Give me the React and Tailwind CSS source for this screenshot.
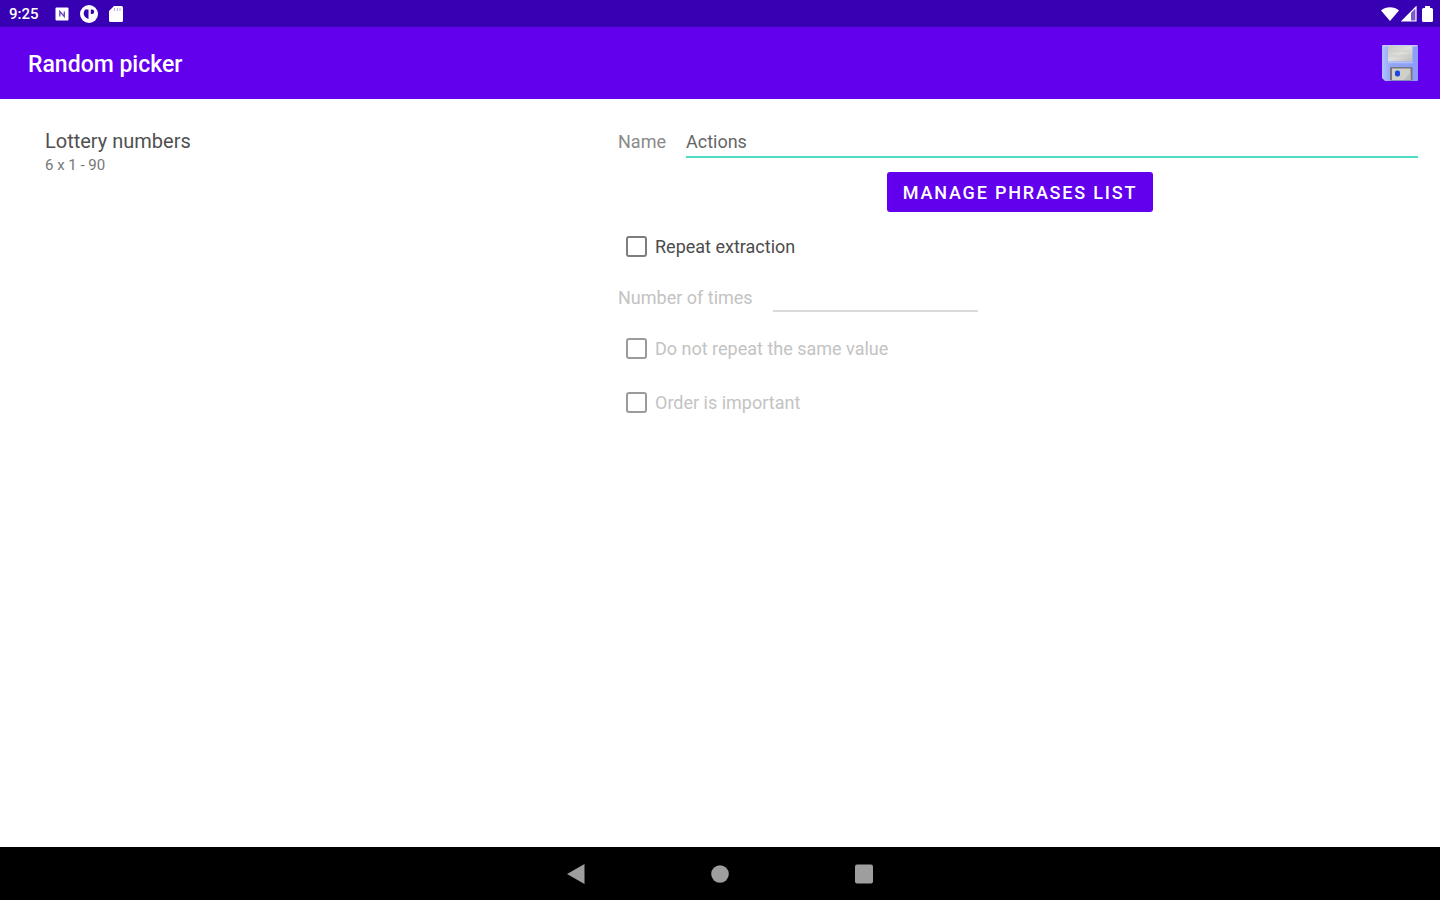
import React from "react";

function StatusBar() {
  return (
    <div className="flex h-[27px] items-center justify-between bg-[#3700b3] pl-[9px] pr-[7px] pt-px text-white">
      <div className="flex items-center">
        <time className="w-[46px] text-[15px] leading-5 font-medium">9:25</time>
        <svg className="h-[14px] w-[14px]" viewBox="0 0 14 14" aria-hidden="true">
          <rect x="0.5" y="0.5" width="13" height="13" rx="1" fill="currentColor" />
          <path d="M4.800 9.500v-5L9.300 9.500v-5" stroke="#3700b3" strokeOpacity="0.75" strokeWidth="1.3" fill="none" />
        </svg>
        <svg className="ml-[11px] h-[18px] w-[18px]" viewBox="0 0 18 18" aria-hidden="true">
          <circle cx="9" cy="9" r="9" fill="currentColor" />
          <path d="M5 4.500h3.500v9.500C5.500 13 3.600 11 3.600 8z" fill="#3700b3" />
          <path d="M10.800 4.500h1.200a2.200 2.200 0 0 1 0 4.400h-1.200z" fill="#3700b3" />
        </svg>
        <svg className="ml-[11px] h-4 w-[14px]" viewBox="0 0 14 16" aria-hidden="true">
          <path d="M5 0h7.5Q14 0 14 1.5v13q0 1.5-1.5 1.5h-11Q0 16 0 14.500V5z" fill="currentColor" />
          <path d="M5.500 2v3M8.300 2v3M11 2v3" stroke="#3700b3" strokeOpacity="0.35" strokeWidth="1" />
        </svg>
      </div>
      <div className="flex items-center">
        <svg className="h-[14px] w-[18px]" viewBox="0 0 18 14" aria-hidden="true">
          <path d="M9 14 0 3.400C5-.9 13-.9 18 3.400z" fill="currentColor" />
        </svg>
        <svg className="ml-[2px] h-4 w-4" viewBox="0 0 16 16" aria-hidden="true">
          <path d="M15 1v14H1z" fill="currentColor" fillOpacity="0.35" />
          <path d="M15 1v14H1z" fill="none" stroke="currentColor" strokeWidth="1.200" />
          <path d="M10 6v9H1z" fill="currentColor" />
        </svg>
        <svg className="ml-[5px] h-4 w-[11px]" viewBox="0 0 11 16" aria-hidden="true">
          <path d="M3 0h5v2h1.500Q11 2 11 3.500v11q0 1.500-1.500 1.500h-8Q0 16 0 14.500v-11Q0 2 1.500 2H3z" fill="currentColor" />
        </svg>
      </div>
    </div>
  );
}

function FloppyIcon() {
  return (
    <svg className="h-9 w-9" viewBox="0 0 36 36" aria-hidden="true">
      <defs>
        <linearGradient id="floppy-body" x1="0" y1="0" x2="1" y2="0">
          <stop offset="0" stopColor="#b3c3ff" />
          <stop offset="0.250" stopColor="#93a4f7" />
          <stop offset="1" stopColor="#8c9dfa" />
        </linearGradient>
        <linearGradient id="floppy-label" x1="0" y1="0" x2="1" y2="1">
          <stop offset="0" stopColor="#c6c6c3" />
          <stop offset="0.500" stopColor="#dededb" />
          <stop offset="1" stopColor="#bcbcbb" />
        </linearGradient>
      </defs>
      <path d="M1 0h34q1 0 1 1v34q0 1-1 1H3l-3-3V1q0-1 1-1z" fill="url(#floppy-body)" />
      <path d="M1 0.750h34" stroke="#c3ccfb" strokeWidth="1.500" />
      <rect x="6" y="1" width="24.500" height="15.500" rx="1" fill="url(#floppy-label)" />
      <path d="M8 6h20M8 11h20" stroke="#cbcbc9" strokeWidth="1" />
      <path d="M6 17.500h25" stroke="#b3c0fb" strokeWidth="1.500" />
      <rect x="8" y="22" width="22.500" height="13.500" rx="1" fill="#77777d" />
      <rect x="10" y="23.500" width="18.500" height="11.500" fill="#d0d0ca" />
      <rect x="13" y="25.500" width="5" height="6" rx="2" fill="#1747e0" />
      <path d="M22 35h6.500v-8z" fill="#bcbcbb" />
    </svg>
  );
}

function CheckRow({ id, label, disabled }) {
  return (
    <div className="flex h-[54px] items-center pb-px pl-2">
      <input
        id={id}
        type="checkbox"
        disabled={disabled}
        className="h-[21px] w-[21px] appearance-none rounded-[3px] border-2 border-[#7d7d7d] bg-white checked:bg-[#6200ee] disabled:border-[#9b9b9b]"
      />
      <label
        htmlFor={id}
        className={disabled ? "pl-2 text-lg leading-6 text-[#c3c3c3]" : "pl-2 text-lg leading-6 text-[#4c4c4c]"}
      >
        {label}
      </label>
    </div>
  );
}

export default function App() {
  return (
    <div className="flex min-h-screen flex-col bg-white font-['Roboto',sans-serif]">
      <StatusBar />
      <header className="flex h-[72px] items-center justify-between bg-[#6200ee] pl-7 pr-[22px]">
        <h1 className="pt-1 text-[23px] leading-8 font-medium text-white">Random picker</h1>
        <button type="button" aria-label="Save">
          <FloppyIcon />
        </button>
      </header>

      <main className="grid flex-1 grid-cols-[2fr_3fr] content-start">
        <ul className="pt-[30px] pl-[45px]">
          <li>
            <p className="text-xl leading-6 text-[#505050]">Lottery numbers</p>
            <p className="text-[15px] leading-6 text-[#777777]">6 x 1 - 90</p>
          </li>
        </ul>

        <form className="pt-[31px] pr-[22px] pl-[42px]">
          <div className="flex gap-5">
            <label htmlFor="name" className="text-lg leading-6 text-[#8a8a8a]">
              Name
            </label>
            <input
              id="name"
              type="text"
              defaultValue="Actions"
              className="h-7 min-w-0 flex-1 border-b-2 border-[#4fdcc5] bg-transparent pb-1 text-lg leading-6 text-[#666666] outline-none"
            />
          </div>
          <div className="flex justify-center pt-[14px] pb-2 pl-1">
            <button
              type="button"
              className="h-10 rounded-[3px] bg-[#6200ee] px-4 pt-[2px] text-lg leading-6 font-medium tracking-widest text-white uppercase"
            >
              Manage phrases list
            </button>
          </div>
          <CheckRow id="repeat" label="Repeat extraction" />
          <div className="flex gap-5 pt-3 pb-[10px]">
            <label htmlFor="times" className="text-lg leading-6 text-[#c3c3c3]">
              Number of times
            </label>
            <input
              id="times"
              type="text"
              disabled
              className="h-[26px] w-[205px] border-b-2 border-[#dadada] bg-transparent text-lg leading-6"
            />
          </div>
          <CheckRow id="unique" label="Do not repeat the same value" disabled />
          <CheckRow id="order" label="Order is important" disabled />
        </form>
      </main>

      <nav className="flex h-[53px] items-center justify-center gap-[126px] bg-black text-[#9e9e9e]">
        <button type="button" aria-label="Back">
          <svg className="h-5 w-[18px]" viewBox="0 0 18 20" aria-hidden="true">
            <path d="M0 10 17.500 0v20z" fill="currentColor" />
          </svg>
        </button>
        <button type="button" aria-label="Home">
          <svg className="h-[18px] w-[18px]" viewBox="0 0 18 18" aria-hidden="true">
            <circle cx="9" cy="9" r="8.800" fill="currentColor" />
          </svg>
        </button>
        <button type="button" aria-label="Overview">
          <svg className="h-5 w-[18px]" viewBox="0 0 18 20" aria-hidden="true">
            <rect x="0" y="0.500" width="18" height="19" rx="2" fill="currentColor" />
          </svg>
        </button>
      </nav>
    </div>
  );
}
